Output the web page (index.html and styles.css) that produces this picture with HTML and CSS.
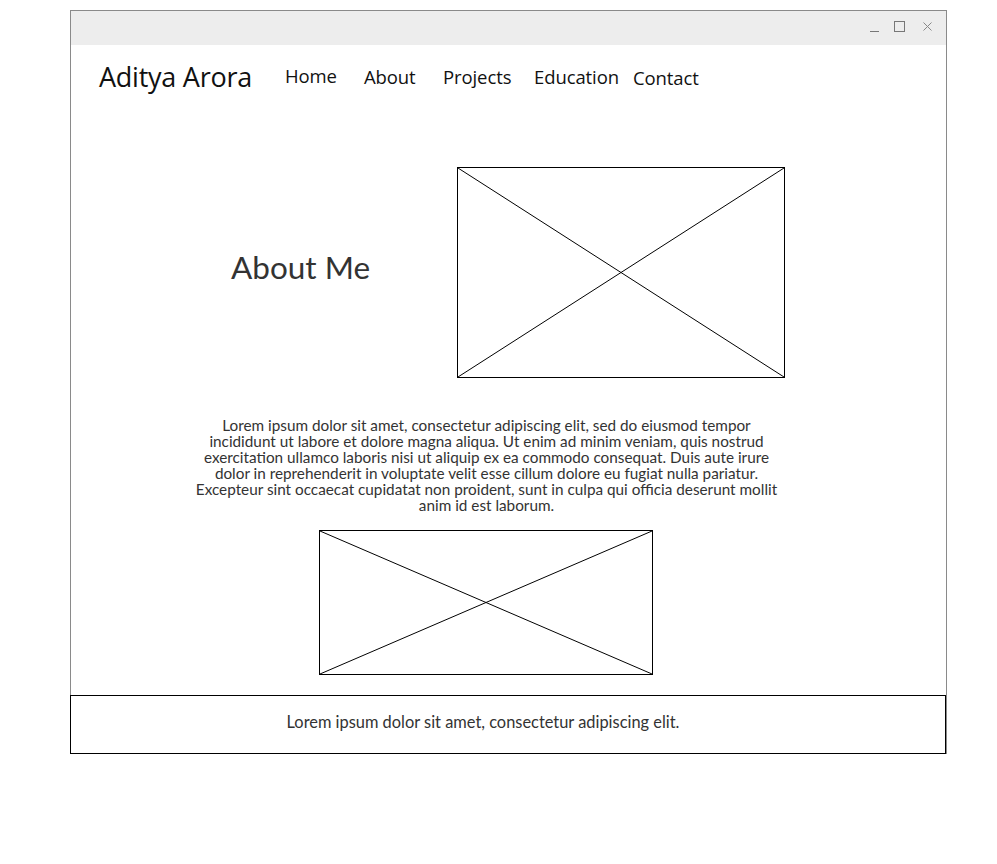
FILE: index.html
```html
<!DOCTYPE html>
<html>
<head>
<meta charset="utf-8">
<link rel="stylesheet" href="styles.css">
</head>
<body>
<div class="window">
  <div class="titlebar">
    <svg class="ctl" width="84" height="20" viewBox="0 0 84 20">
      <line x1="16" y1="14.5" x2="25" y2="14.5" stroke="#777" stroke-width="1"/>
      <rect x="40.5" y="4.5" width="10" height="10" fill="none" stroke="#777" stroke-width="1"/>
      <path d="M69.5 5.5 L77.5 13.5 M77.5 5.5 L69.5 13.5" stroke="#888" stroke-width="1"/>
    </svg>
  </div>
  <div class="content">
    <header class="header">
      <div class="brand">Aditya Arora</div>
      <nav class="nav">
        <a class="nav-item home">Home</a>
        <a class="nav-item about">About</a>
        <a class="nav-item projects">Projects</a>
        <a class="nav-item education">Education</a>
        <a class="nav-item contact">Contact</a>
      </nav>
    </header>
    <section class="hero">
      <h1 class="hero-title">About Me</h1>
      <div class="placeholder ph-hero">
        <svg viewBox="0 0 100 100" preserveAspectRatio="none"><line x1="0" y1="0" x2="100" y2="100"/><line x1="100" y1="0" x2="0" y2="100"/></svg>
      </div>
    </section>
    <p class="lead">Lorem ipsum dolor sit amet, consectetur adipiscing elit, sed do eiusmod tempor<br>incididunt ut labore et dolore magna aliqua. Ut enim ad minim veniam, quis nostrud<br>exercitation ullamco laboris nisi ut aliquip ex ea commodo consequat. Duis aute irure<br>dolor in reprehenderit in voluptate velit esse cillum dolore eu fugiat nulla pariatur.<br>Excepteur sint occaecat cupidatat non proident, sunt in culpa qui officia deserunt mollit<br>anim id est laborum.</p>
    <div class="placeholder ph-second">
      <svg viewBox="0 0 100 100" preserveAspectRatio="none"><line x1="0" y1="0" x2="100" y2="100"/><line x1="100" y1="0" x2="0" y2="100"/></svg>
    </div>
  </div>
  <footer class="footer">Lorem ipsum dolor sit amet, consectetur adipiscing elit.</footer>
</div>
</body>
</html>
```
FILE: styles.css
```css
html, body {
  margin: 0;
  padding: 0;
  background: #fff;
}
body {
  font-family: "Open Sans", "Noto Sans", sans-serif;
  color: #111;
}
.window {
  box-sizing: border-box;
  margin: 10px 0 0 70px;
  width: 877px;
  height: 744px;
  border: 1px solid #8a8a8a;
  border-bottom: none;
  display: flex;
  flex-direction: column;
}
.titlebar {
  height: 34px;
  background: #ededed;
  display: flex;
  justify-content: flex-end;
  align-items: center;
}
.ctl {
  display: block;
  margin-right: 8px;
  margin-top: -3px;
}
.content {
  flex: 1;
  display: flex;
  flex-direction: column;
}
.header {
  height: 62px;
  display: flex;
  align-items: center;
  padding-left: 28px;
  padding-bottom: 4px;
}
.brand {
  font-size: 27px;
  width: 186px;
  color: #111;
  letter-spacing: -0.25px;
}
.nav {
  display: flex;
  align-items: center;
}
.nav-item {
  font-size: 18.5px;
  color: #111;
  letter-spacing: -0.1px;
}
.home { width: 79px; margin-top: -2px; }
.about { width: 79px; }
.projects { width: 91px; }
.education { width: 99px; }
.contact { margin-top: 2px; }
.hero {
  display: flex;
  align-items: center;
  margin-top: 56px;
  height: 211px;
}
.hero-title {
  margin: 0 0 12px 160px;
  width: 226px;
  font-family: "Lato", "Open Sans", sans-serif;
  font-weight: 400;
  font-size: 31.5px;
  color: #333;
}
.placeholder {
  box-sizing: border-box;
  border: 1px solid #000;
  background: #fff;
}
.placeholder svg {
  display: block;
  width: 100%;
  height: 100%;
}
.placeholder line {
  stroke: #000;
  stroke-width: 1;
  vector-effect: non-scaling-stroke;
}
.ph-hero {
  width: 328px;
  height: 211px;
}
.lead {
  margin: 39px 0 0 0;
  text-align: center;
  padding-right: 44px;
  font-family: "Lato", "Open Sans", sans-serif;
  font-size: 15.3px;
  line-height: 16px;
  color: #333;
}
.ph-second {
  margin: 17px 0 0 248px;
  width: 334px;
  height: 145px;
}
.footer {
  box-sizing: border-box;
  margin: 0 0 0 -1px;
  width: 876px;
  height: 59px;
  border: 1px solid #000;
  box-shadow: 1px 1px 0 #8a8a8a;
  text-align: center;
  padding: 16px 50px 0 0;
  font-family: "Lato", "Open Sans", sans-serif;
  font-size: 16.4px;
  color: #333;
}
```
